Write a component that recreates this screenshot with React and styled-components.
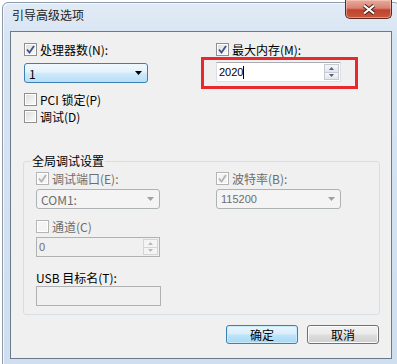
import styled, { createGlobalStyle } from 'styled-components';

const GlobalStyle = createGlobalStyle`
	html, body {
		margin: 0;
		padding: 0;
		background: #fff;
		overflow: hidden;
	}
	body {
		font-family: "Noto Sans CJK SC", sans-serif;
		font-size: 12px;
		color: #000;
	}
`;

const Window = styled.div`
	display: flex;
	flex-direction: column;
	margin: 2px 0 0 2px;
	width: 396px;
	padding-bottom: 7px;
	border: 1px solid #8d9aab;
	border-radius: 6px 6px 0 0;
	background: linear-gradient(180deg, #e1ebf6 0%, #d7e4f2 10%, #cfdff0 100%);
	box-shadow: inset 1px 1px 0 #f4f8fc;
`;

const TitleBar = styled.div`
	display: flex;
	align-items: flex-start;
	height: 28px;
	padding: 0 7px 0 9px;
`;

const Title = styled.span`
	padding-top: 2px;
	line-height: 20px;
	font-size: 12px;
	color: #1b1b1b;
`;

const CloseButton = styled.div`
	display: flex;
	align-items: center;
	justify-content: center;
	margin: -3px 0 0 auto;
	width: 45px;
	height: 18px;
	border: 1px solid #5a2a24;
	border-top: none;
	border-radius: 0 0 5px 5px;
	background: linear-gradient(180deg, #e9ab9c 0%, #d88372 45%, #c0432f 55%, #c9573d 100%);
	box-shadow: inset 0 0 0 1px rgba(255, 220, 210, 0.45);
`;

const Client = styled.div`
	display: flex;
	flex-direction: column;
	margin: 0 7px;
	height: 328px;
	box-sizing: border-box;
	border: 1px solid #6a7a8d;
	background: #f0f0f0;
`;

const TopSection = styled.div`
	display: grid;
	grid-template-columns: 192px 1fr;
	padding: 11px 0 0 13px;
`;

const Column = styled.div`
	display: flex;
	flex-direction: column;
	align-items: flex-start;
`;

const CheckRow = styled.label`
	display: flex;
	align-items: center;
	gap: 3px;
	height: 13px;
	margin-top: ${({ gap }) => gap || 0}px;
	line-height: 13px;
	color: ${({ disabled }) => (disabled ? '#6d6d6d' : '#000')};
	white-space: nowrap;
`;

const Box = styled.span`
	display: flex;
	align-items: center;
	justify-content: center;
	width: 13px;
	height: 13px;
	box-sizing: border-box;
	border: 1px solid ${({ disabled }) => (disabled ? '#b4b4b4' : '#8e8f8f')};
	background: ${({ disabled }) =>
		disabled
			? '#f4f4f4'
			: 'linear-gradient(135deg, #dcdcdc 0%, #f0f0f0 60%, #fbfbfb 100%)'};
	box-shadow: inset 0 0 0 1px #fff;
`;

const Checkbox = ({ checked, disabled, label, gap }) => (
	<CheckRow disabled={disabled} gap={gap}>
		<Box disabled={disabled}>
			{checked && (
				<svg width="9" height="9" viewBox="0 0 9 9">
					<path
						d="M1 4.5 L3.5 7.5 L8 1"
						fill="none"
						stroke={disabled ? '#b3b3b3' : '#3d5290'}
						strokeWidth="1.8"
					/>
				</svg>
			)}
		</Box>
		<span>{label}</span>
	</CheckRow>
);

const Combo = styled.div`
	display: flex;
	align-items: center;
	justify-content: space-between;
	width: ${({ width }) => width || 124}px;
	height: 20px;
	margin-top: ${({ gap }) => gap || 0}px;
	padding: 0 5px 0 4px;
	box-sizing: border-box;
	border: 1px solid ${({ focused }) => (focused ? '#3c7fb1' : '#adb2b5')};
	border-radius: 3px;
	background: ${({ focused }) =>
		focused
			? 'linear-gradient(180deg, #f1f8fd 0%, #e3f2fc 45%, #cbe8fa 55%, #b8dff7 100%)'
			: '#f4f4f4'};
	color: ${({ focused }) => (focused ? '#000' : '#6d6d6d')};
	font-family: ${({ mono }) =>
		mono ? '"Noto Sans CJK SC", sans-serif' : '"Liberation Sans", Arial, sans-serif'};
	font-size: ${({ mono }) => (mono ? 12 : 11)}px;
`;

const Arrow = ({ color }) => (
	<svg width="7" height="4" viewBox="0 0 7 4">
		<path d="M0 0 H7 L3.5 4 Z" fill={color} />
	</svg>
);

const Field = styled.div`
	position: relative;
	display: flex;
	align-items: center;
	width: ${({ width }) => width || 125}px;
	height: 20px;
	margin-top: ${({ gap }) => gap || 0}px;
	padding: 0 1px 0 2px;
	box-sizing: border-box;
	border: 1px solid ${({ disabled }) => (disabled ? '#afb2b5' : '#dbdfe6')};
	border-top-color: ${({ disabled }) => (disabled ? '#afb2b5' : '#abadb3')};
	background: ${({ disabled }) => (disabled ? '#f0f0f0' : '#fff')};
	color: ${({ disabled }) => (disabled ? '#6d6d6d' : '#000')};
	font-family: "Liberation Sans", Arial, sans-serif;
	font-size: 11px;
`;

const Caret = styled.span`
	width: 1px;
	height: 13px;
	background: #000;
`;

const Spin = styled.div`
	display: flex;
	flex-direction: column;
	margin-left: auto;
	width: 15px;
	height: 16px;
`;

const SpinButton = styled.div`
	display: flex;
	flex: 1;
	align-items: center;
	justify-content: center;
	border: 1px solid ${({ disabled }) => (disabled ? '#d5d5d5' : '#c6cbd3')};
	background: ${({ disabled }) =>
		disabled ? '#f4f4f4' : 'linear-gradient(180deg, #f7f7f7, #e4e6ea)'};
	& + & {
		border-top: none;
	}
`;

const SpinArrow = ({ up, disabled }) => (
	<svg width="5" height="3" viewBox="0 0 5 3">
		<path
			d={up ? 'M0 3 H5 L2.5 0 Z' : 'M0 0 H5 L2.5 3 Z'}
			fill={disabled ? '#b9b9b9' : '#4d6185'}
		/>
	</svg>
);

const Spinner = ({ disabled }) => (
	<Spin>
		<SpinButton disabled={disabled}>
			<SpinArrow up disabled={disabled} />
		</SpinButton>
		<SpinButton disabled={disabled}>
			<SpinArrow disabled={disabled} />
		</SpinButton>
	</Spin>
);

const Highlight = styled.div`
	position: absolute;
	top: -6px;
	left: -16px;
	right: -18px;
	bottom: -8px;
	border: 3px solid #e8282b;
	pointer-events: none;
`;

const Group = styled.fieldset`
	margin: 31px 11px 0 12px;
	padding: 4px 0 8px 12px;
	border: 1px solid #d5dfe5;
	border-radius: 3px;
	min-width: 0;
`;

const Legend = styled.legend`
	margin-left: -5px;
	padding: 0 1px;
	line-height: 14px;
	color: #000;
`;

const GroupGrid = styled.div`
	display: grid;
	grid-template-columns: 180px 1fr;
`;

const PlainLabel = styled.div`
	height: 13px;
	margin-top: ${({ gap }) => gap || 0}px;
	line-height: 13px;
	white-space: nowrap;
`;

const ButtonRow = styled.div`
	display: flex;
	justify-content: flex-end;
	gap: 9px;
	margin-top: 10px;
	padding-right: 12px;
`;

const Button = styled.div`
	display: flex;
	align-items: center;
	justify-content: center;
	width: 72px;
	height: 19px;
	box-sizing: border-box;
	border: 1px solid ${({ primary }) => (primary ? '#3c7fb1' : '#707070')};
	border-radius: 3px;
	background: ${({ primary }) =>
		primary
			? 'linear-gradient(180deg, #e9f5fc 0%, #d8eefb 45%, #bde3f8 55%, #a7d8f4 100%)'
			: 'linear-gradient(180deg, #f2f2f2 0%, #ebebeb 45%, #dddddd 55%, #cfcfcf 100%)'};
	box-shadow: inset 0 0 0 1px ${({ primary }) => (primary ? '#c9ecfd' : '#fcfcfc')};
	line-height: 13px;
`;

const App = () => (
	<>
		<GlobalStyle />
		<Window>
			<TitleBar>
				<Title>引导高级选项</Title>
				<CloseButton>
					<svg width="14" height="11" viewBox="0 0 14 11">
						<path d="M2 1.5 L12 9.5 M12 1.5 L2 9.5" stroke="#4a1f1a" strokeWidth="4" />
						<path d="M2 1.5 L12 9.5 M12 1.5 L2 9.5" stroke="#fff" strokeWidth="2.2" />
					</svg>
				</CloseButton>
			</TitleBar>
			<Client>
				<TopSection>
					<Column>
						<Checkbox checked label="处理器数(N):" />
						<Combo focused mono width={124} gap={7}>
							<span>1</span>
							<Arrow color="#000" />
						</Combo>
						<Checkbox label="PCI 锁定(P)" gap={10} />
						<Checkbox label="调试(D)" gap={4} />
					</Column>
					<Column>
						<Checkbox checked label="最大内存(M):" />
						<Field gap={6}>
							<span>2020</span>
							<Caret />
							<Spinner />
							<Highlight />
						</Field>
					</Column>
				</TopSection>
				<Group>
					<Legend>全局调试设置</Legend>
					<GroupGrid>
						<Column>
							<Checkbox checked disabled label="调试端口(E):" />
							<Combo mono gap={4}>
								<span>COM1:</span>
								<Arrow color="#a0a0a0" />
							</Combo>
							<Checkbox disabled label="通道(C)" gap={11} />
							<Field disabled width={124} gap={4}>
								<span>0</span>
								<Spinner disabled />
							</Field>
							<PlainLabel gap={14}>USB 目标名(T):</PlainLabel>
							<Field disabled width={125} gap={2} />
						</Column>
						<Column>
							<Checkbox checked disabled label="波特率(B):" />
							<Combo gap={4} width={125}>
								<span>115200</span>
								<Arrow color="#a0a0a0" />
							</Combo>
						</Column>
					</GroupGrid>
				</Group>
				<ButtonRow>
					<Button primary>确定</Button>
					<Button>取消</Button>
				</ButtonRow>
			</Client>
		</Window>
	</>
);

export default App;
